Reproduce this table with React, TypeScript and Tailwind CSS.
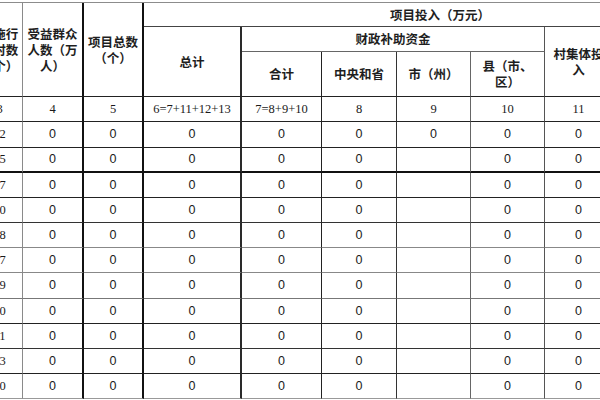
import React from "react";
import clsx from "clsx";

// right border of each column (line weight / tone differs like the scan)
const colR = [
  "border-r border-r-[#8a8a8a]",
  "border-r-2 border-r-[#111]",
  "border-r-2 border-r-[#111]",
  "border-r-2 border-r-[#2a2a2a]",
  "border-r border-r-[#222]",
  "border-r border-r-[#333]",
  "border-r border-r-[#666]",
  "border-r border-r-[#555]",
  "border-r border-r-[#555]",
  "border-r border-r-[#555]",
  "border-r border-r-[#555]",
];

// bottom border of each data row
const rowB = [
  "border-b border-b-[#222]",
  "border-b border-b-[#222]",
  "border-b-2 border-b-[#111]",
  "border-b border-b-[#222]",
  "border-b border-b-[#333]",
  "border-b border-b-[#888]",
  "border-b border-b-[#888]",
  "border-b border-b-[#777]",
  "border-b border-b-[#222]",
  "border-b border-b-[#333]",
  "border-b border-b-[#222]",
  "border-b border-b-[#999]",
];

const labels = ["3", "4", "5", "6=7+11+12+13", "7=8+9+10", "8", "9", "10", "11", "12", "13"];

const villages = ["15", "17", "10", "18", "17", "19", "10", "11", "13", "10"];

const rows: string[][] = [
  labels,
  ["42", "0", "0", "0", "0", "0", "0", "0", "0", "0", "0"],
  ...villages.map((v) => [v, "0", "0", "0", "0", "0", "", "0", "0", "0", "0"]),
];

const cjk = "font-['Noto_Sans_CJK_SC',sans-serif] text-[12.5px] leading-[16px] font-semibold text-[#1e1e1e]";

function Head({ className, children }: { className: string; children: React.ReactNode }) {
  return (
    <div className={clsx("flex items-center justify-center text-center", cjk, className)}>
      <span>{children}</span>
    </div>
  );
}

export default function App() {
  return (
    <div className="w-[600px] h-[400px] overflow-hidden bg-white">
      <div className="-ml-[23px] mt-[2px] w-max border-t border-t-[#8c8c8c] grid grid-cols-[46px_61px_60px_98px_80px_75px_74px_74px_68px_62px_62px] grid-rows-[24px_25px_45px_25px_26px_25px_25px_25px_25px_25px_26px_25px_25px_25px_25px]">
        {/* Header */}
        <Head className={clsx("col-start-1 row-start-1 row-span-3 border-b border-b-[#222]", colR[0])}>
          实施行<br />政村数<br />（个）
        </Head>
        <Head className={clsx("col-start-2 row-start-1 row-span-3 border-b border-b-[#222]", colR[1])}>
          受益群众<br />人数（万<br />人）
        </Head>
        <Head className={clsx("col-start-3 row-start-1 row-span-3 border-b border-b-[#222]", colR[2])}>
          项目总数<br />（个）
        </Head>
        <Head className="col-start-4 col-span-8 row-start-1 border-b border-b-[#444] border-r border-r-[#555]">
          项目投入（万元）
        </Head>
        <Head className={clsx("col-start-4 row-start-2 row-span-2 border-b border-b-[#222]", colR[3])}>
          总计
        </Head>
        <Head className="col-start-5 col-span-4 row-start-2 border-b border-b-[#666] border-r border-r-[#555]">
          财政补助资金
        </Head>
        <Head className={clsx("col-start-9 row-start-2 row-span-2 border-b border-b-[#222]", colR[8])}>
          村集体投<br />入
        </Head>
        <Head className={clsx("col-start-10 row-start-2 row-span-2 border-b border-b-[#222]", colR[9])}>
          群众自<br />筹
        </Head>
        <Head className={clsx("col-start-11 row-start-2 row-span-2 border-b border-b-[#222]", colR[10])}>
          其他
        </Head>
        <Head className={clsx("col-start-5 row-start-3 border-b border-b-[#222]", colR[4])}>合计</Head>
        <Head className={clsx("col-start-6 row-start-3 border-b border-b-[#222]", colR[5])}>中央和省</Head>
        <Head className={clsx("col-start-7 row-start-3 border-b border-b-[#222]", colR[6])}>市（州）</Head>
        <Head className={clsx("col-start-8 row-start-3 border-b border-b-[#222]", colR[7])}>
          县（市、<br />区）
        </Head>

        {/* Body */}
        {rows.map((row, r) =>
          row.map((v, c) => (
            <div
              key={`${r}-${c}`}
              className={clsx(
                "flex items-center justify-center text-[12.5px] text-[#1a1a1a] whitespace-nowrap",
                r === 0 || c === 0
                  ? "font-['Liberation_Serif',serif]"
                  : "font-['Liberation_Sans',sans-serif]",
                colR[c],
                rowB[r]
              )}
            >
              {v}
            </div>
          ))
        )}
      </div>
    </div>
  );
}
